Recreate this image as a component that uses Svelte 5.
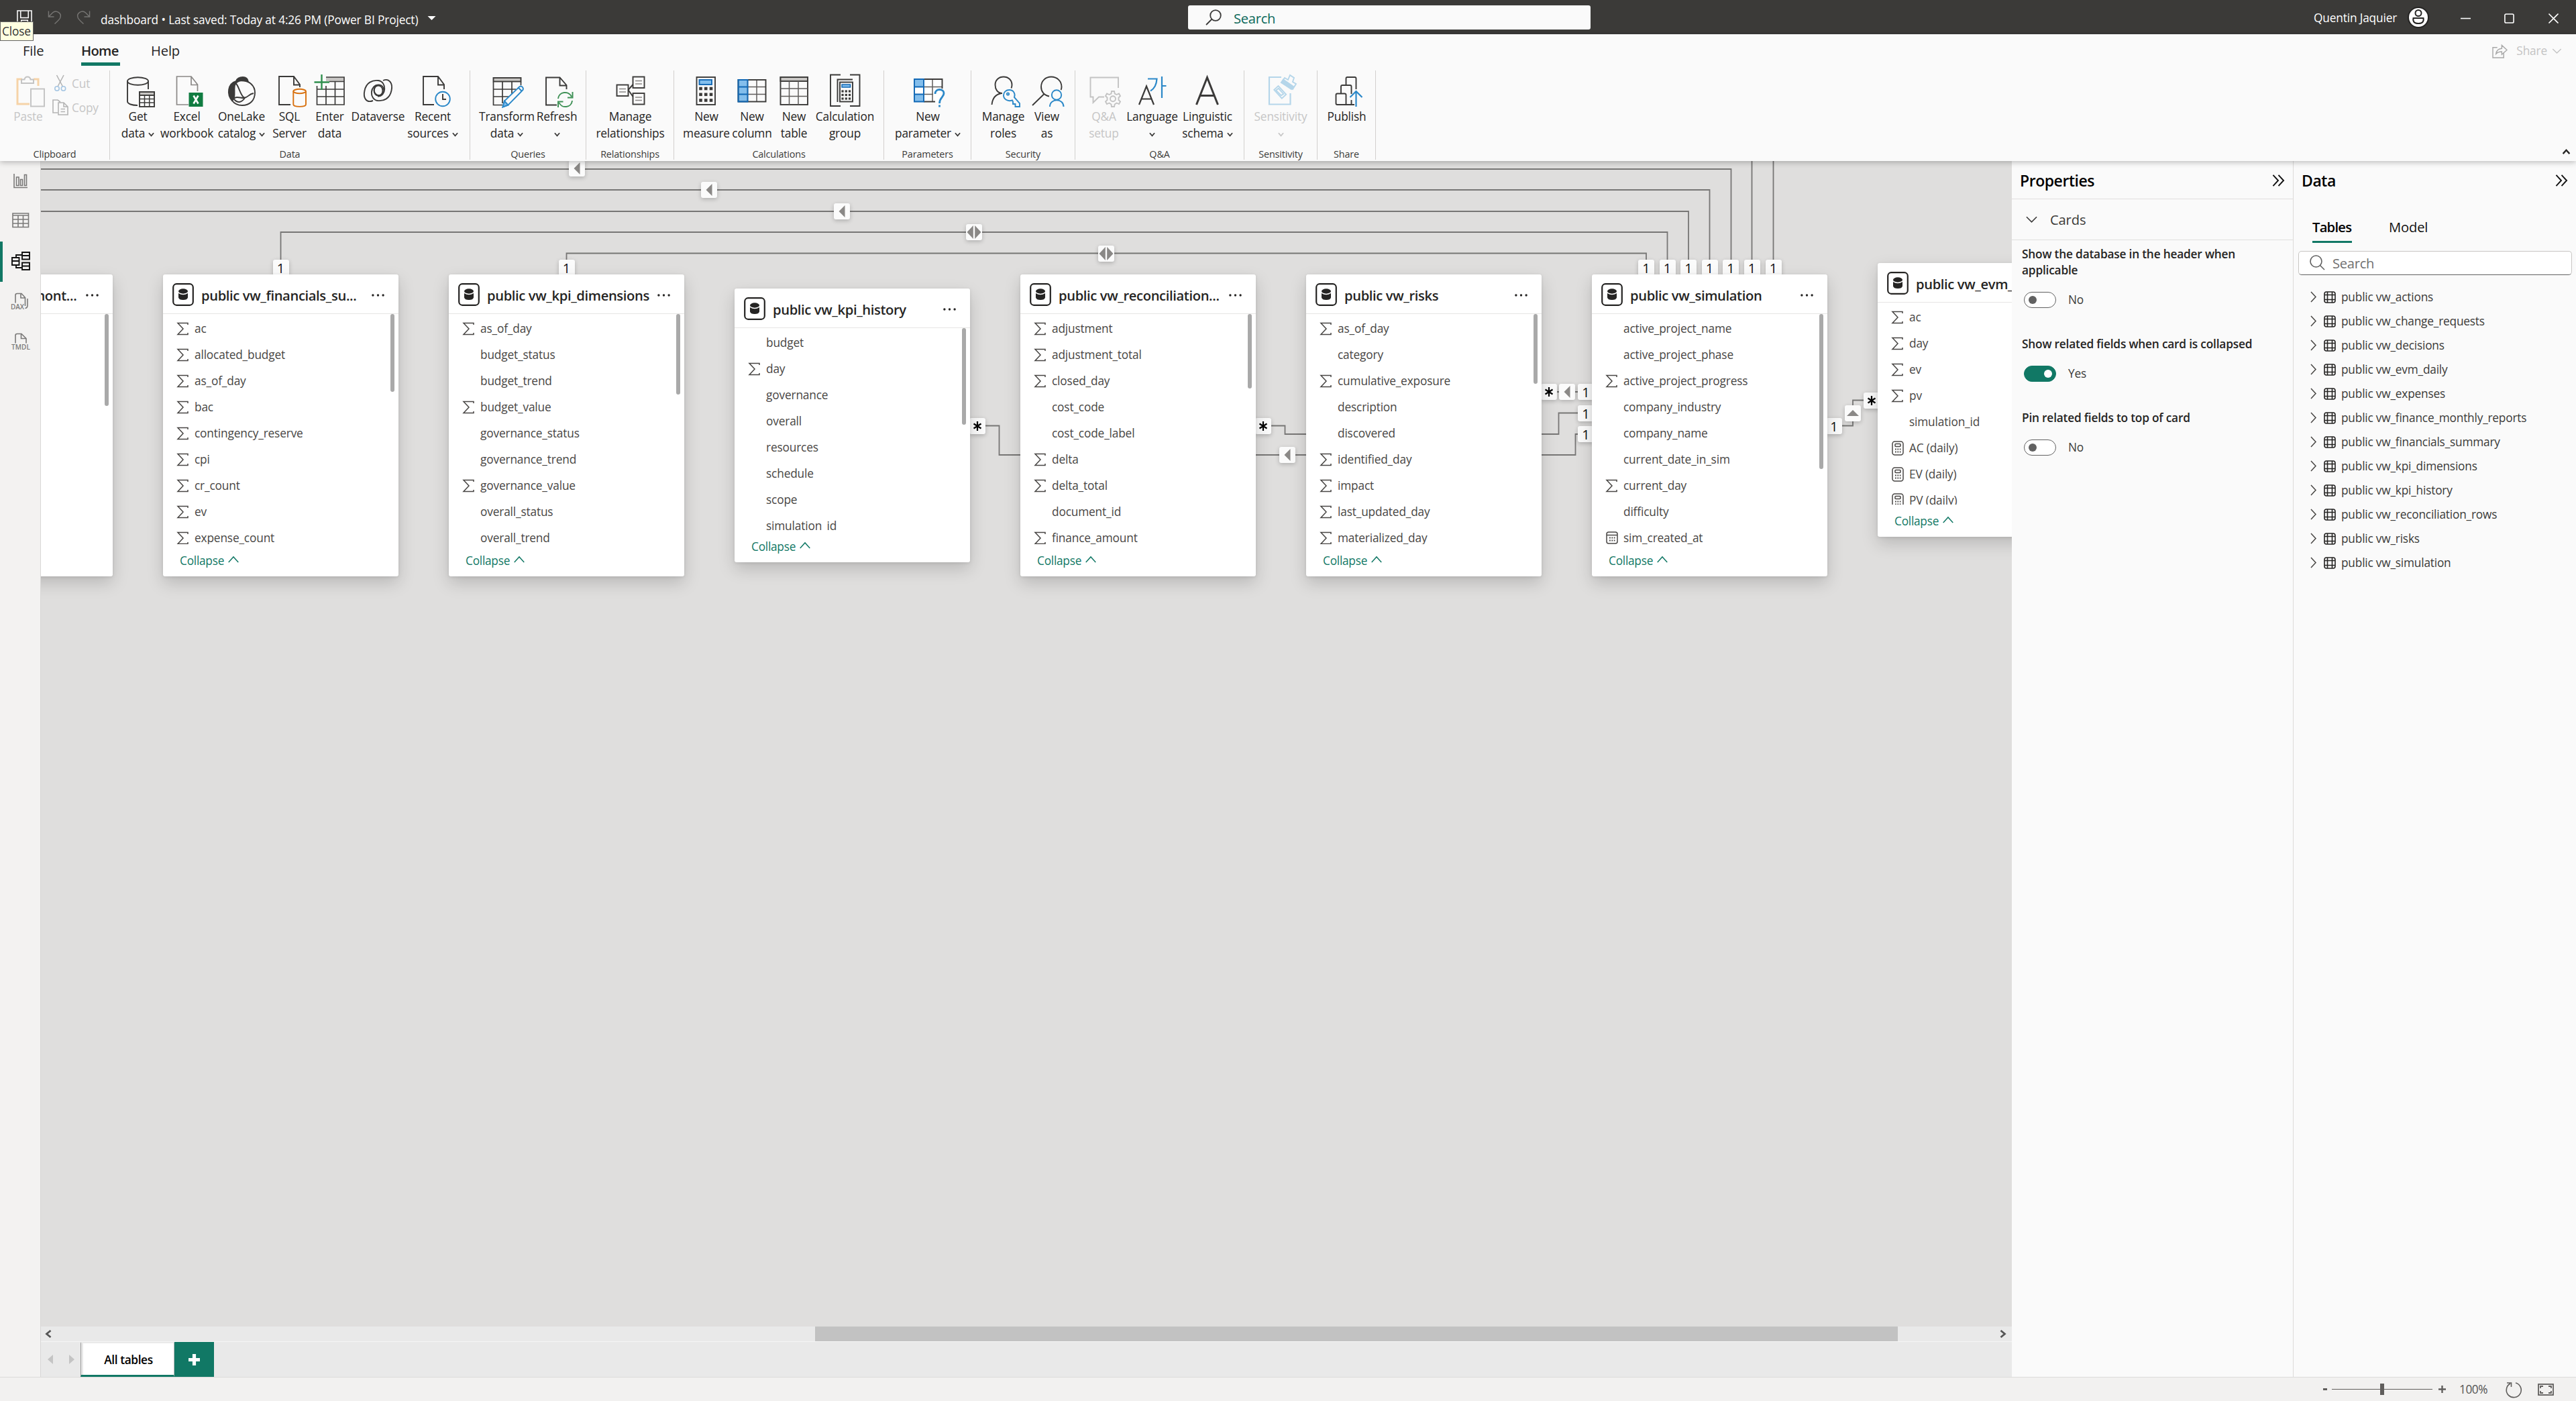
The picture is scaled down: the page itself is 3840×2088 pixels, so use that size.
<script>
  const dots = (xs, ys, s) =>
    ys.map((y) => xs.map((x) => `<rect x="${x - s / 2}" y="${y - s / 2}" width="${s}" height="${s}" fill="#3b3a39" stroke="none"/>`).join('')).join('');

  const icons = {
    paste: `<g stroke="#c3c3c3"><path d="M-9 6H-16V43H2M8 6H15V16" stroke="#f6d3a8" stroke-width="3"/><path d="M-10 12V6.500H-5.500C-5 3 -2.500 2.500 -1 2.500S3 3 3.500 6.500H8V12Z" fill="#fafafa"/><rect x="4" y="20.500" width="20" height="26" fill="#fafafa"/></g>`,
    get: `<ellipse cx="-.5" cy="9" rx="15.500" ry="5.800"/><path d="M-16 9V39C-16 43 -9 45 -1 45M15 9V21"/><g transform="translate(2 25)"><rect width="22" height="22" fill="#fff"/><rect width="22" height="5" fill="#c8c6c4"/><path d="M0 10.500H22M0 16H22M7.500 5V22M14.700 5V22" stroke-width="1.500"/></g>`,
    excel: `<path d="M2 44H-15.500V2H6L15.500 14V24M6 2V14.500H15.500" stroke="#8a8886" stroke-width="1.700"/><rect x="2.500" y="26" width="21" height="21" fill="#107c41" stroke="none"/><path d="M9.500 30.500L16.500 42.500M16.500 30.500L9.500 42.500" stroke="#fff" stroke-width="2.600"/>`,
    onelake: `<path d="M-8 9C-21 13 -22 29 -14 38C-8 33 -12 22 -10 15Q-8 9 0 8Q6 8 10 10Q9 3 2 3Q-6 3 -8 9Z" fill="#3b3a39" stroke="#3b3a39"/><path d="M0 8C12 8 20 16 20 26C20 38 12 45 1 45C-6 45 -11 42 -14 38C-10 30 -3 34 3 34C10 34 10 28 18 27M-9 12C-4 14 -2 32 5 34M-11 36Q-3 45 5 34"/>`,
    sql: `<path d="M1 44H-16V2H6L15 14V18M6 2V14.500H15"/><g stroke="#d8710f"><ellipse cx="14.600" cy="24" rx="9.300" ry="3.200"/><path d="M5.300 24V43.500C5.300 48 24 48 24 43.500V24"/></g>`,
    enter: `<rect x="-6" y="3" width="27" height="6" fill="#c8c6c4" stroke="none"/><path d="M-6 3H21V44H-19.500V16M-1 9.500H21M-19.500 21H21M-19.500 32H21M-6 16V44M7.500 9.500V44" stroke-width="1.700"/><path d="M-12.500 -1V22M-23.500 10.500H-1" stroke="#2f8f4e" stroke-width="2.400"/>`,
    dataverse: `<path d="M7 8C16 4 22 12 19.500 23C17 35 8 39 -1 38C-14 36 -13 14 1 14.500C10 15 11 29 2 30C-5 30.500 -8 24 -5 18"/><path d="M-8 38C-18 42 -23 34 -20.500 23C-18 11 -9 7 0 8C13 10 12 32 -1 31.500"/><ellipse cx="0" cy="23" rx="6.500" ry="7.500"/>`,
    recent: `<path d="M2 44H-14V2H8L17 14V21M8 2V14.500H17"/><circle cx="15" cy="35.500" r="10.800" stroke="#2b88c8"/><path d="M15 28V36H20"/>`,
    transform: `<rect x="-20.500" y="4" width="41" height="5.500" fill="#c8c6c4"/><path d="M20.500 10V15M-20.500 10V44.500H-7M-20.500 21H13M-20.500 32H3M-7 10V42M7 10V29" stroke-width="1.700"/><path d="M-6.500 47.500L-4 38.500L18 17.500Q21 15.500 23 18Q25 21 22.500 23L1.500 44.500Z" stroke="#2b88c8" fill="#fafafa"/><path d="M-6.500 47.500L-4 38.500L1.500 44.500ZM17 19L22 24" stroke="#2b88c8" fill="#83beec"/>`,
    refresh: `<path d="M0 44.500H-16V3.500H4.500L14.500 15V21M4.500 3.500V15.500H14.500"/><g stroke="#3f9156" stroke-width="2"><path d="M2 35C3 24 18 23 22 32M23.500 25V33.500H16M23 38C22 49 7 50 3.500 41M2 48V39.500H9.500"/></g>`,
    relations: `<rect x="-20.500" y="14.500" width="17" height="16.500"/><rect x="3.500" y="2.500" width="17" height="16.500"/><rect x="3.500" y="27" width="17" height="16.500"/><path d="M-3.500 22L3.500 14M-3.500 22L3.500 32"/><path d="M-17 20.500H-7M-17 25H-7M7 8.500H17M7 13H17M7 33H17M7 37.500H17" stroke="#8a8886" stroke-width="1.500"/>`,
    measure: `<rect x="-14.500" y="3" width="27.500" height="41"/><rect x="-10.500" y="7" width="18.500" height="7" fill="#83beec" stroke="#1168b5"/>${dots([-8.5, -0.8, 7], [20, 28.8, 37.5], 4.6)}`,
    column: `<rect x="-20.500" y="7" width="14" height="32.500" fill="#83beec" stroke="none"/><path d="M-6.500 7V39.500M7 7V39.500M-6.500 17.500H20.500M-6.500 28.500H20.500" stroke="#605e5c" stroke-width="1.500"/><rect x="-20.500" y="7" width="41" height="32.500"/><path d="M-6.500 7H-20.500V39.500H-6.500ZM-20.500 17.500H-6.500M-20.500 28.500H-6.500" stroke="#1168b5"/>`,
    table: `<rect x="-20.500" y="3" width="40.500" height="41"/><rect x="-20.500" y="3" width="40.500" height="6" fill="#c8c6c4"/><path d="M-7.500 9V44M6 9V44M-20.500 20H20M-20.500 31.500H20" stroke="#605e5c" stroke-width="1.500"/>`,
    calcgroup: `<path d="M-7 -.500H-22V46H-7M7 -.500H21.500V46H7M11 6.500H-11.500V40"/><rect x="-8" y="10.500" width="19" height="29"/><rect x="-5" y="14" width="12.500" height="4" fill="#83beec" stroke="#1168b5" stroke-width="1.500"/>${dots([-4, 1.3, 6.5], [24, 29.5, 35], 3.2)}`,
    param: `<rect x="-20" y="6" width="14" height="33.500" fill="#83beec" stroke="none"/><rect x="-6" y="6" width="26" height="33" fill="#fff" stroke="none"/><rect x="-19" y="18" width="12" height="10" fill="#fff" stroke="none"/><path d="M7 6V39.500M-6 17.500H21M-6 28.500H8" stroke="#605e5c" stroke-width="1.500"/><path d="M-6 39.500H11M-6 6H21.500V20"/><path d="M-6 6H-20V39.500H-6ZM-20 17.500H-6M-20 28.500H-6" stroke="#1168b5"/><path d="M11 28C11 19 24 20 24 27C24 33 17.500 33 17.500 42M17.500 44.500V47.500" stroke="#2b88c8" stroke-width="2.800"/>`,
    roles: `<path d="M-2 27C-9 27 -12.500 21 -12.500 14.500C-12.500 7 -7 2.500 0 2.500S12.500 7 12.500 14.500Q12.500 17 11.500 19.500M-17.500 44Q-16 29 -3 27"/><path d="M13 37.500C5 40 0 35 0 30C0 25 4 22 8.500 22C15 22 18 28 16 33L24 42V47H17.500V43H14V39.500Z" stroke="#2b88c8" fill="#fafafa"/><circle cx="6.500" cy="28" r="1.600" stroke="#2b88c8"/>`,
    viewas: `<path d="M3 31.500C-5 30 -9 24 -9 17.500C-9 9 -3 2.500 6 2.500S21.500 9 21.500 17.500Q21.500 20 20.500 22M-5 28.500L-22 45"/><g stroke="#2b88c8"><circle cx="14" cy="29.500" r="7.200"/><path d="M4 47C4 34 24.500 34 24.500 47"/></g>`,
    qna: `<g stroke="#c3c3c3"><path d="M21 19V3.500H-20.500V32.500H-16.500V41L-8 32.500H0"/><path d="M10.500 27.500L11 24H15L15.700 27.500L18.500 29L22 27.500L24 31L21.500 33.500V37L24 39.500L22 43L18.500 41.500L15.700 43.500L15 47H11L10.500 43.500L7.500 41.500L4 43L2 39.500L4.500 37V33.500L2 31L4 27.500L7.500 29Z"/><circle cx="13" cy="35.300" r="4"/></g>`,
    language: `<path d="M-20 44L-9 16.500L2 44M-16.500 35.500H-1.500" stroke-width="2.200"/><path d="M-7 5.500H6.500C6 14 3 20 -3 23.500M14 2V34M14 16H20.500" stroke="#2b88c8" stroke-width="2.200"/>`,
    linguistic: `<path d="M-16.500 44L-.5 3.500L15.500 44M-11 30.500H10" stroke-width="3"/>`,
    sensitivity: `<g stroke="#b5d6ea"><path d="M1 3H-17V43.500H14.500V27" stroke-width="2.200"/><path d="M-10 24L-5 17L9 27L4 34Z" transform="rotate(12 0 24)"/><path d="M-7 24L-4 20.500L5 27L2 30Z" transform="rotate(12 0 24)"/><path d="M1 11L6 4L11 7L14 0L20 4L18 10L23 13L18 21Z" fill="#fafafa"/><path d="M1 11L4 6.500L19 17L16 21Z" fill="#b5d6ea"/></g>`,
    publish: `<path d="M7 44H-14.500Q-16.500 44 -16.500 42V29.500Q-16.500 27.500 -14.500 27.500H-3.500Q-1.500 27.500 -1.500 29.500V44M-9 27V17Q-9 15 -7 15H4.500Q6.500 15 6.500 17V28M6.500 37V44M-1.500 14V5Q-1.500 3 .5 3H11.500Q13.500 3 13.500 5V21M11 44H6"/><path d="M13.500 47V24M4.500 33L13.500 24L22.500 33" stroke="#2b88c8" stroke-width="2.200"/>`
  };

  // Each tool: icon, width, label lines, caret flag, disabled flag.
  const groups = [
    { name: 'Data', w: 537, off: 8, tools: [
      ['get', 67, 'Get', 'data', 1], ['excel', 79, 'Excel', 'workbook'], ['onelake', 84, 'OneLake', 'catalog', 1], ['sql', 59, 'SQL', 'Server'],
      ['enter', 61, 'Enter', 'data'], ['dataverse', 83, 'Dataverse', ''], ['recent', 80, 'Recent', 'sources', 1]] },
    { name: 'Queries', w: 173, off: 13, tools: [['transform', 83, 'Transform', 'data', 1], ['refresh', 66, 'Refresh', '', 1]] },
    { name: 'Relationships', w: 131, off: 10, tools: [['relations', 111, 'Manage', 'relationships']] },
    { name: 'Calculations', w: 313, off: 11, tools: [['measure', 74, 'New', 'measure'], ['column', 62, 'New', 'column'], ['table', 63, 'New', 'table'], ['calcgroup', 89, 'Calculation', 'group']] },
    { name: 'Parameters', w: 130, off: 10, tools: [['param', 110, 'New', 'parameter', 1]] },
    { name: 'Security', w: 155, off: 12, tools: [['roles', 71, 'Manage', 'roles'], ['viewas', 59, 'View', 'as']] },
    { name: 'Q&A', w: 252, off: 12, tools: [['qna', 61, 'Q&A', 'setup', 0, 1], ['language', 83, 'Language', '', 1], ['linguistic', 82, 'Linguistic', 'schema', 1]] },
    { name: 'Sensitivity', w: 109, off: 10, tools: [['sensitivity', 88, 'Sensitivity', '', 1, 1]] },
    { name: 'Share', w: 87, off: 6, tools: [['publish', 75, 'Publish', '']] }
  ];

  // Fields starting with "+" are summable, "#" measures, "@" dates.
  const cards = [
    { x: -244, y: 169, h: 450, bar: 137, title: 'public vw_finance_mont...', fields: [] },
    { x: 182, y: 169, h: 450, bar: 116, title: 'public vw_financials_su...', fields: ['+ac', '+allocated_budget', '+as_of_day', '+bac', '+contingency_reserve', '+cpi', '+cr_count', '+ev', '+expense_count'] },
    { x: 608, y: 169, h: 450, bar: 120, title: 'public vw_kpi_dimensions', fields: ['+as_of_day', 'budget_status', 'budget_trend', '+budget_value', 'governance_status', 'governance_trend', '+governance_value', 'overall_status', 'overall_trend'] },
    { x: 1034, y: 190, h: 408, bar: 144, title: 'public vw_kpi_history', fields: ['budget', '+day', 'governance', 'overall', 'resources', 'schedule', 'scope', 'simulation_id'] },
    { x: 1460, y: 169, h: 450, bar: 111, title: 'public vw_reconciliation...', fields: ['+adjustment', '+adjustment_total', '+closed_day', 'cost_code', 'cost_code_label', '+delta', '+delta_total', 'document_id', '+finance_amount'] },
    { x: 1886, y: 169, h: 450, bar: 104, title: 'public vw_risks', fields: ['+as_of_day', 'category', '+cumulative_exposure', 'description', 'discovered', '+identified_day', '+impact', '+last_updated_day', '+materialized_day'] },
    { x: 2312, y: 169, h: 450, bar: 231, title: 'public vw_simulation', fields: ['active_project_name', 'active_project_phase', '+active_project_progress', 'company_industry', 'company_name', 'current_date_in_sim', '+current_day', 'difficulty', '@sim_created_at'] },
    { x: 2738, y: 152, h: 408, bar: 200, title: 'public vw_evm_daily', fields: ['+ac', '+day', '+ev', '+pv', 'simulation_id', '#AC (daily)', '#EV (daily)', '#PV (daily)'] }
  ];

  // Relationship ends and direction markers, centred on canvas points.
  const badges = [
    ...[418.5, 844.5, 2454, 2485.5, 2517, 2548.5, 2580, 2611.5, 2643.5].map((x) => ['1', x - 61, 159]),
    ['l', 799, 11], ['l', 996, 43], ['l', 1194, 75], ['d', 1391, 106], ['d', 1588, 138],
    ['*', 1396, 394.5], ['*', 1822, 394.5], ['l', 1858, 438], ['*', 2248, 344], ['l', 2275, 344],
    ['1', 2303, 344], ['1', 2303, 375.5], ['1', 2303, 407], ['1', 2673, 394.5], ['u', 2701, 375.5], ['*', 2729, 356.5]
  ];

  const tables = ['actions', 'change_requests', 'decisions', 'evm_daily', 'expenses', 'finance_monthly_reports', 'financials_summary', 'kpi_dimensions', 'kpi_history', 'reconciliation_rows', 'risks', 'simulation'];
  const settings = [
    { label: 'Show the database in the header when applicable', on: false },
    { label: 'Show related fields when card is collapsed', on: true },
    { label: 'Pin related fields to top of card', on: false }
  ];
</script>

<div class="app">
  <header class="titlebar">
    <div class="quick">
      <svg class="save" viewBox="0 0 24 24"><path d="M1 1H23V23H1ZM6 1V12H18V1M7 23V16H17V23" /></svg>
      <svg class="undo" viewBox="0 0 22 22"><path d="M1.500 1V10H10M1.500 10L8 3.500C13 -1 23 4 19.500 12Q18.500 14 11 21" /></svg>
      <svg class="redo" viewBox="0 0 22 22"><path d="M20.500 1V10H12M20.500 10L14 3.500C9 -1 -1 4 2.500 12Q3.500 14 11 21" /></svg>
      <span class="doc">dashboard • Last saved: Today at 4:26 PM (Power BI Project)</span>
      <svg class="drop" viewBox="0 0 14 7"><path d="M0 0H14L7 7Z" /></svg>
    </div>
    <div class="topsearch">
      <svg viewBox="0 0 24 24"><circle cx="15" cy="9" r="7.800" /><path d="M9.500 14.500L1 23" /></svg>
      <span>Search</span>
    </div>
    <div class="account">
      <span class="user">Quentin Jaquier</span>
      <svg class="avatar" viewBox="0 0 30 30"><circle cx="15" cy="15" r="15" fill="#fff" /><circle cx="15" cy="8.500" r="4.500" /><path d="M7.500 16H22.500Q24 24 15 24T7.500 16Z" /></svg>
      <svg class="win" viewBox="0 0 16 16"><path d="M0 8H16" /></svg>
      <svg class="win" viewBox="0 0 16 16"><rect x="1" y="1" width="14" height="14" rx="2" /></svg>
      <svg class="win" viewBox="0 0 16 16"><path d="M.5 .5L15.500 15.500M15.500 .5L.5 15.500" /></svg>
    </div>
    <div class="tooltip">Close</div>
  </header>

  <section class="ribbon">
    <nav class="menu">
      <span class="m file">File</span><span class="m home">Home</span><span class="m help">Help</span>
      <span class="share">
        <svg class="shareicon" viewBox="0 0 24 22"><path d="M8 5H1V21H18V14M6 15Q7 7 15 6.500V1.500L23 9L15 16V11.500Q9 11.500 6 15Z" /></svg>
        Share
        <svg class="sharechev" viewBox="0 0 16 9"><path d="M1 1L8 8L15 1" /></svg>
      </span>
    </nav>
    <div class="groups">
      <div class="group clip">
        <div class="tools">
          <div class="tool off pastetool"><svg class="ticon" viewBox="-24 0 48 48">{@html icons.paste}</svg><span>Paste</span></div>
          <div class="mini">
            <div><svg class="mi" viewBox="0 0 24 24"><path d="M6.500 0L15.500 17M17 0L8 17" /><g stroke="#a5c6e3"><circle cx="7" cy="20" r="3.200" /><circle cx="16.500" cy="20" r="3.200" /></g></svg>Cut</div>
            <div><svg class="mi" viewBox="0 0 24 24"><path d="M8 20H1V1H8L12 4M9 5H17L23 11V23H9ZM17 5V11H23M12.500 14.500H19M12.500 18.500H19" /></svg>Copy</div>
          </div>
        </div>
        <span class="gname">Clipboard</span>
      </div>
      {#each groups as g}
        <div class="group" style:width="{g.w}px">
          <div class="tools" style:padding-left="{g.off}px">
            {#each g.tools as [icon, w, a, b, caret, off]}
              <div class="tool" class:off style:width="{w}px">
                <svg class="ticon" viewBox="-24 0 48 48">{@html icons[icon]}</svg>
                <span>{a}</span>
                <span>{b}{#if caret}<svg class="caret" class:alone={!b} viewBox="0 0 10 7"><path d="M1 1L5 5.500L9 1" /></svg>{/if}</span>
              </div>
            {/each}
          </div>
          <span class="gname">{g.name}</span>
        </div>
      {/each}
      <svg class="fold" viewBox="0 0 14 9"><path d="M1.500 8L7 2L12.500 8" /></svg>
    </div>
  </section>

  <main class="work">
    <aside class="rail">
      <div><svg viewBox="0 0 28 28"><path d="M5 3V23.500H25M8.500 20.500V8H12V20.500ZM14.500 20.500V11.500H17.500V20.500ZM20.500 20.500V4.500H23.500V20.500Z" /></svg></div>
      <div><svg viewBox="0 0 28 28"><path d="M3 2H26.500V22.500H3ZM3 5H26.500M3 11H26.500M3 17H26.500M11 5V22.500M18.500 5V22.500" /></svg></div>
      <div class="cur"><svg viewBox="0 0 28 28"><path d="M2 8H12.500V19H2ZM2 13H12.500M17 0H28V10.500H17ZM17 5H28M17 15.500H28V26H17ZM17 20.500H28M8 8V4H17M8 19V23H17" /></svg></div>
      <div><svg viewBox="0 0 28 28"><path d="M7 15.500V4Q7 1.500 9.500 1.500H16L21.500 7.500V20M15 2V8H21.500M25 9V19Q25 23 21.500 23.500" /><text x="0" y="25" textLength="20">DAX</text></svg></div>
      <div><svg viewBox="0 0 28 28"><path d="M7 15.500V4Q7 1.500 9.500 1.500H16L23 8.500V15.500M15.500 2V8.500H23" /><text x="1" y="25" textLength="28">TMDL</text></svg></div>
    </aside>

    <section class="center">
      <div class="canvas">
        <svg class="wires" viewBox="0 0 2938 1737">
          <path d="M0 12H2519.500V150M0 43H2487.500V150M0 75H2456V150M357.500 150V106H2424.500V150M783.500 150V137.500H2393V150M2550.500 0V150M2582.500 0V150" />
          <path d="M1400 394.500H1428.500V438H1460M1826 394.500H1854.500V407H1886M1811 438H1886M2237 344H2312M2237 407H2262.500V375.500H2295M2237 438H2287.500V407H2295M2680 394.500H2701V356.500H2725" />
        </svg>
        {#each badges as [kind, x, y]}
          <div class="badge" style:left="{x - 12}px" style:top="{y - 12}px">
            {#if kind === '1'}<b>1</b>{:else}
              <svg viewBox="0 0 24 24">
                {#if kind === '*'}<path class="star" d="M12 5V19M6.500 8.500L17.500 15.500M17.500 8.500L6.500 15.500" />
                {:else if kind === 'l'}<path d="M16.500 3V21L7.500 12Z" />
                {:else if kind === 'u'}<path d="M3 16H21L12 7Z" />
                {:else}<path d="M10.800 2V22L1.500 12ZM13.200 2V22L22.500 12Z" />{/if}
              </svg>
            {/if}
          </div>
        {/each}
        {#each cards as c}
          <article class="card" style:left="{c.x}px" style:top="{c.y}px" style:height="{c.h}px">
            <header>
              <svg class="db" viewBox="0 0 32 34"><rect x="1.200" y="1.200" width="29.600" height="31.600" rx="5" /><ellipse class="solid" cx="16" cy="12" rx="7" ry="3.700" /><path class="solid" d="M9 15Q16 19.500 23 15V21.500Q22 25 16 25T9 21.500Z" /></svg>
              <h3>{c.title}</h3>
              <svg class="more" viewBox="0 0 20 4"><circle cx="2" cy="2" r="1.800" /><circle cx="10" cy="2" r="1.800" /><circle cx="18" cy="2" r="1.800" /></svg>
            </header>
            <ul>
              {#each c.fields as f}
                <li>
                  <svg class="ftype" viewBox="0 0 20 22">
                    {#if f[0] === '+'}<path d="M17 5V2.500H2L10 11L2 19.500H17V17" />
                    {:else if f[0] === '#'}<rect x="2" y="1" width="16" height="20" rx="3.500" /><rect x="6" y="4.500" width="8" height="4" rx="1" /><path class="dot" d="M6 12.500H14.500M6 16.500H14.500" />
                    {:else if f[0] === '@'}<rect x="2" y="2" width="16" height="17" rx="3" /><path d="M2 6.500H18" /><path class="dot" d="M6 10.500H14.500M6 14.500H14.500" />{/if}
                  </svg>
                  {f.replace(/^[+#@]/, '')}
                </li>
              {/each}
            </ul>
            <footer>Collapse<svg viewBox="0 0 18 11"><path d="M1 10L9 1L17 10" /></svg></footer>
            <i class="thumb" style:height="{c.bar}px"></i>
          </article>
        {/each}
      </div>
      <div class="hscroll">
        <svg viewBox="0 0 10 12"><path d="M8.500 1L2.500 6L8.500 11" /></svg>
        <i></i>
        <svg viewBox="0 0 10 12"><path d="M1.500 1L7.500 6L1.500 11" /></svg>
      </div>
      <div class="pages">
        <svg class="nav" viewBox="0 0 8 14"><path d="M8 0V14L0 7Z" /></svg>
        <svg class="nav" viewBox="0 0 8 14"><path d="M0 0V14L8 7Z" /></svg>
        <div class="pagetab">All tables</div>
        <div class="add"><svg viewBox="0 0 18 18"><path d="M9 0V18M0 9H18" /></svg></div>
      </div>
    </section>

    <aside class="props">
      <div class="phead"><h2>Properties</h2><svg viewBox="0 0 19 19"><path d="M1 1L9 9.500L1 18M9.500 1L17.500 9.500L9.500 18" /></svg></div>
      <div class="sect"><svg viewBox="0 0 18 10"><path d="M1 1L9 9L17 1" /></svg>Cards</div>
      <div class="settings">
        {#each settings as s}
          <div class="setting">
            <div class="label">{s.label}</div>
            <div class="switchrow"><span class="switch" class:on={s.on}><i></i></span>{s.on ? 'Yes' : 'No'}</div>
          </div>
        {/each}
      </div>
    </aside>

    <aside class="data">
      <div class="phead"><h2>Data</h2><svg viewBox="0 0 19 19"><path d="M1 1L9 9.500L1 18M9.500 1L17.500 9.500L9.500 18" /></svg></div>
      <div class="dtabs"><span class="active">Tables</span><span>Model</span></div>
      <div class="dsearch"><svg viewBox="0 0 23 23"><circle cx="9.500" cy="9.500" r="8.500" /><path d="M15.500 15.500L22 22" /></svg>Search</div>
      <div class="tree">
        {#each tables as t}
          <div class="node">
            <svg class="chev" viewBox="0 0 9 17"><path d="M1 1L8 8.500L1 16" /></svg>
            <svg class="grid" viewBox="0 0 18 18"><rect x="1" y="1" width="16" height="16" rx="3" /><path d="M1 5.500H17M1 12.500H17M5.500 1V17M12.500 1V17" /></svg>
            public vw_{t}
          </div>
        {/each}
      </div>
    </aside>
  </main>

  <footer class="status">
    <span class="minus"></span>
    <span class="slider"><i></i></span>
    <svg class="plus" viewBox="0 0 12 12"><path d="M6 0V12M0 6H12" /></svg>
    <span class="pct">100%</span>
    <svg class="reset" viewBox="0 0 24 26"><path d="M15 3A11 11 0 1 1 7 4M2 3H8.500V9" /></svg>
    <svg class="fit" viewBox="0 0 24 18"><rect x="1" y="1" width="22" height="16" /><path d="M4 7V4H8M16 4H20V7M20 11V14H16M8 14H4V11" /></svg>
  </footer>
</div>

<style>
  :global(body) { margin: 0; overflow: hidden; }
  .app { width: 3840px; height: 2088px; display: flex; flex-direction: column; font-family: 'Open Sans', 'Noto Sans', sans-serif; font-size: 17.3px; letter-spacing: -0.16px; color: #252423; background: #fafafa; }
  svg { display: block; flex: none; fill: none; overflow: visible; }
  h2, h3, ul { margin: 0; padding: 0; }

  .titlebar { height: 51px; flex: none; display: flex; background: #3b3a38; position: relative; color: #fff; }
  .quick { width: 1771px; display: flex; align-items: flex-start; box-sizing: border-box; padding-left: 25px; }
  .save { width: 23px; height: 23px; margin-top: 15px; stroke: #fff; stroke-width: 1.6; }
  .undo { width: 21px; height: 22px; margin: 15px 0 0 23px; stroke: #767573; stroke-width: 1.5; }
  .redo { width: 21px; height: 22px; margin: 15px 0 0 22px; stroke: #767573; stroke-width: 1.5; }
  .doc { margin: 18px 0 0 15px; line-height: 24px; width: 487px; white-space: nowrap; letter-spacing: -0.13px; }
  .drop { width: 13px; height: 6px; margin-top: 24px; fill: #fff; }
  .topsearch { width: 600px; height: 36px; margin-top: 8px; border-radius: 3px; background: #fafafa; color: #0c695a; display: flex; align-items: center; font-size: 20.2px; letter-spacing: -0.3px; box-sizing: border-box; padding-left: 26px; gap: 18px; }
  .topsearch span { margin-top: 2px; }
  .topsearch svg { width: 24px; height: 24px; stroke: #3b3a39; stroke-width: 1.8; }
  .account { flex: 1; display: flex; align-items: center; height: 51px; }
  .user { margin-left: 1078px; width: 141px; white-space: nowrap; margin-top: 2px; }
  .avatar { width: 30px; height: 30px; stroke: #252423; stroke-width: 2; }
  .win { width: 15px; height: 15px; margin: 4px 0 0 47.5px; stroke: #fff; stroke-width: 1.7; }
  .win + .win { margin-left: 50.5px; }
  .tooltip { position: absolute; left: 0; top: 32px; width: 48px; height: 27px; border: 1px solid #646464; background: #ffffe1; color: #333; line-height: 28px; text-indent: 2px; z-index: 5; }

  .ribbon { height: 189px; flex: none; display: flex; flex-direction: column; background: #fafafa; box-shadow: 0 2px 8px rgba(0, 0, 0, 0.25); position: relative; z-index: 3; }
  .menu { height: 54px; display: flex; align-items: flex-start; font-size: 20.2px; }
  .m { line-height: 30px; padding-top: 9px; }
  .file { margin-left: 34px; width: 87px; }
  .home { font-weight: 600; width: 58px; border-bottom: 5px solid #117865; height: 33px; letter-spacing: -0.7px; }
  .help { margin-left: 46px; }
  .share { margin-left: auto; display: flex; align-items: center; font-size: 17.3px; line-height: 24px; margin-top: 13px; color: #c4c4c4; padding-right: 21px; }
  .shareicon { width: 23px; height: 21px; stroke: #a8a8a8; stroke-width: 1.5; margin-right: 13px; }
  .sharechev { width: 15px; height: 8px; stroke: #c4c4c4; stroke-width: 1.6; margin-left: 7px; }
  .groups { height: 135px; display: flex; }
  .group { height: 133px; box-sizing: border-box; border-right: 1.5px solid #d2d0ce; display: flex; flex-direction: column; justify-content: space-between; }
  .clip { width: 164px; }
  .tools { display: flex; padding-top: 7px; }
  .tool { display: flex; flex-direction: column; align-items: center; line-height: 24.5px; white-space: nowrap; }
  .tool span { display: flex; align-items: center; height: 24.5px; }
  .off, .mini { color: #c6c6c6; }
  .ticon { width: 48px; height: 48px; margin-bottom: 2px; stroke: #3b3a39; stroke-width: 1.9; }
  .caret { width: 9px; height: 7px; margin: 4px 0 0 5px; stroke: #3b3a39; stroke-width: 2; }
  .caret.alone { margin-left: 0; }
  .off .caret { stroke: #c6c6c6; }
  .pastetool { width: 60px; margin-left: 12px; }
  .mini { display: flex; flex-direction: column; gap: 12px; padding-left: 6px; }
  .mini div { display: flex; align-items: center; gap: 5px; height: 24px; }
  .mi { width: 24px; height: 24px; stroke: #b4b4b4; stroke-width: 1.6; }
  .gname { font-size: 14.4px; line-height: 17px; text-align: center; color: #3b3a39; }
  .fold { width: 13px; height: 8px; stroke: #252423; stroke-width: 2.6; margin: 117px 8px 0 auto; }

  .work { height: 1812px; flex: none; display: flex; }
  .rail { width: 60px; border-right: 1px solid #d8d7d6; background: #f3f2f1; display: flex; flex-direction: column; }
  .rail div { height: 60px; box-sizing: border-box; display: flex; align-items: center; justify-content: center; }
  .rail svg { width: 28px; height: 28px; stroke: #7a7978; stroke-width: 1.6; }
  .rail text { fill: #7a7978; stroke: none; font-size: 10px; font-weight: 600; letter-spacing: 0; }
  .rail .cur { border-left: 4px solid #117865; padding-right: 4px; }
  .rail .cur svg { stroke: #111; stroke-width: 1.9; }

  .center { width: 2938px; display: flex; flex-direction: column; background: #e9e9e9; }
  .canvas { height: 1737px; background: #dfdedd; position: relative; overflow: hidden; }
  .wires { position: absolute; left: 0; top: 0; width: 2938px; height: 1737px; stroke: #777675; stroke-width: 1.8; }
  .badge { position: absolute; width: 24px; height: 24px; border-radius: 3px; background: #fbfbfb; box-shadow: 0 2px 6px rgba(0, 0, 0, 0.22); text-align: center; font-size: 20px; line-height: 25px; color: #111; }
  .badge b { font-weight: 500; }
  .badge svg { width: 24px; height: 24px; fill: #8a8886; }
  .badge .star { stroke: #000; stroke-width: 2.2; }
  .card { position: absolute; width: 351px; background: #fff; border-radius: 3px; box-shadow: 0 10px 24px rgba(0, 0, 0, 0.17), 0 1px 4px rgba(0, 0, 0, 0.1); display: flex; flex-direction: column; }
  .card header { height: 58px; flex: none; border-bottom: 1px solid #e6e5e4; display: flex; align-items: center; padding: 0 21px 0 14px; }
  .db { width: 32px; height: 34px; stroke: #252423; stroke-width: 2.2; margin-top: 1px; }
  .db .solid { fill: #252423; stroke: none; }
  h3 { flex: 1; margin: 4px 0 0 11px; font-size: 20.2px; font-weight: 600; letter-spacing: -0.38px; white-space: nowrap; }
  .more { width: 19px; height: 4px; fill: #252423; margin-top: 3px; }
  ul { list-style: none; flex: 1; min-height: 0; overflow: hidden; padding-top: 2px; }
  li { height: 39px; line-height: 39px; display: flex; align-items: center; padding-left: 20px; gap: 7px; color: #484644; white-space: nowrap; }
  .ftype { width: 20px; height: 22px; stroke: #484644; stroke-width: 1.5; }
  .ftype .dot { stroke-dasharray: 1.8 1.6; stroke-width: 1.8; }
  .card footer { height: 48px; flex: none; display: flex; align-items: flex-start; padding-left: 25px; line-height: 50px; color: #117865; letter-spacing: -0.25px; }
  .card footer svg { width: 18px; height: 10px; stroke: #117865; stroke-width: 1.6; margin: 18px 0 0 5px; }
  .thumb { position: absolute; right: 6px; top: 59px; width: 6px; border-radius: 3px; background: #a9a9a9; }

  .hscroll { height: 22px; border-bottom: 1px solid #f6f6f6; display: flex; align-items: center; }
  .hscroll svg { width: 10px; height: 12px; stroke: #555; stroke-width: 2.8; margin-left: 6px; }
  .hscroll i { width: 1614px; height: 22px; background: #c2c2c2; margin: 0 146px 0 1138px; }
  .pages { height: 52px; display: flex; align-items: center; }
  .nav { width: 8px; height: 14px; fill: #c4c4c4; margin-left: 10px; }
  .nav + .nav { margin-left: 24px; }
  .pagetab { margin-left: 9px; width: 140px; height: 52px; box-sizing: border-box; background: #fff; border: 1px solid #b8b8b8; border-left: 1px solid #999; box-shadow: inset 3px 0 #e9e9e9; border-top: 2px solid #e9e9e9; border-bottom: 3px solid #117865; text-align: center; line-height: 49px; text-indent: 3px; font-weight: 600; font-size: 17.3px; letter-spacing: -0.4px; color: #000; }
  .add { width: 59px; height: 52px; background: #117865; display: flex; align-items: center; justify-content: center; }
  .add svg { width: 17px; height: 17px; stroke: #fff; stroke-width: 5.5; }

  .props { width: 420px; border-right: 1px solid #dcdbda; box-sizing: border-box; background: #fafafa; }
  .data { flex: 1; background: #fafafa; }
  .phead { height: 56px; display: flex; align-items: center; justify-content: space-between; padding: 1px 12px 0; box-sizing: border-box; }
  .phead svg { width: 19px; height: 18px; stroke: #111; stroke-width: 2; }
  h2 { font-size: 23px; font-weight: 600; letter-spacing: -0.45px; color: #000; }
  .sect { height: 60px; border-top: 1px solid #e0dfde; border-bottom: 1px solid #e0dfde; display: flex; align-items: center; gap: 19px; padding-left: 21px; font-size: 20.2px; color: #3b3a39; }
  .sect svg { width: 17px; height: 10px; stroke: #3b3a39; stroke-width: 1.7; }
  .settings { display: flex; flex-direction: column; gap: 42px; padding: 9px 40px 0 15px; }
  .label { line-height: 24px; font-weight: 600; letter-spacing: -0.2px; }
  .switchrow { display: flex; align-items: center; height: 24px; margin-top: 20px; padding-left: 3px; gap: 18px; color: #3b3a39; line-height: 24px; }
  .switch { width: 48px; height: 24px; box-sizing: border-box; border: 1.6px solid #616161; border-radius: 12px; background: #fff; display: flex; align-items: center; padding: 0 5.5px; }
  .switch i { width: 12px; height: 12px; border-radius: 50%; background: #616161; }
  .switch.on { background: #117865; border-color: #117865; justify-content: flex-end; }
  .switch.on i { background: #fff; }
  .dtabs { height: 78px; display: flex; align-items: flex-end; box-sizing: border-box; padding: 0 0 12px 28px; gap: 55px; font-size: 20.2px; color: #111; }
  .dtabs span { line-height: 30px; height: 36px; border-bottom: 3px solid transparent; }
  .dtabs .active { font-weight: 600; letter-spacing: -0.75px; color: #000; border-color: #117865; width: 59px; white-space: nowrap; }
  .dsearch { height: 36px; box-sizing: border-box; margin: 0 6px 0 7px; background: #fff; border: 1.5px solid #c8c6c4; border-bottom-color: #616161; border-radius: 5px; display: flex; align-items: center; padding-left: 16px; gap: 11px; font-size: 20.2px; letter-spacing: -0.3px; color: #707070; }
  .dsearch svg { width: 23px; height: 23px; stroke: #616161; stroke-width: 1.6; margin-bottom: 2px; }
  .tree { padding-top: 14.5px; letter-spacing: -0.2px; }
  .node { height: 36px; display: flex; align-items: center; padding-left: 25px; color: #3b3a39; white-space: nowrap; }
  .chev { width: 9px; height: 17px; stroke: #484644; stroke-width: 1.5; margin-right: 11px; }
  .grid { width: 18px; height: 18px; stroke: #252423; stroke-width: 1.6; margin-right: 8px; }

  .status { flex: 1; box-sizing: border-box; border-top: 1px solid #dcdbda; background: #f2f1f0; display: flex; align-items: center; color: #555; }
  .minus { width: 6px; height: 2.5px; background: #605e5c; margin-left: 3463px; }
  .slider { width: 150px; height: 1px; background: #605e5c; margin-left: 7px; display: flex; align-items: center; justify-content: center; }
  .slider i { width: 6px; height: 17px; background: #605e5c; }
  .plus { width: 11px; height: 11px; stroke: #605e5c; stroke-width: 2.6; margin-left: 9px; }
  .pct { margin-left: 20px; width: 69px; letter-spacing: -0.5px; }
  .reset { width: 24px; height: 26px; stroke: #605e5c; stroke-width: 1.6; }
  .fit { width: 24px; height: 18px; stroke: #605e5c; stroke-width: 1.8; margin-left: 24px; }
</style>
